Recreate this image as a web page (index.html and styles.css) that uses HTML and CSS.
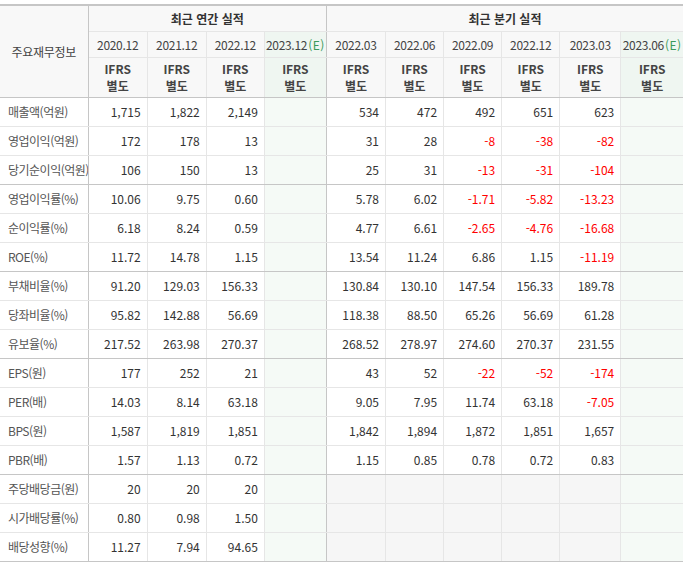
FILE: index.html
```html
<!DOCTYPE html>
<html lang="ko">
<head>
<meta charset="utf-8">
<title>주요재무정보</title>
<link rel="stylesheet" href="styles.css">
</head>
<body>
<table class="fin">
  <colgroup>
    <col class="c-label">
    <col class="c-a"><col class="c-a"><col class="c-a3"><col class="c-e">
    <col class="c-a"><col class="c-a3"><col class="c-a3"><col class="c-a3"><col class="c-q5"><col class="c-e">
  </colgroup>
  <thead>
    <tr class="h1">
      <th rowspan="3" class="label-head">주요재무정보</th>
      <th colspan="4" class="grp grp-end">최근 연간 실적</th>
      <th colspan="6" class="grp">최근 분기 실적</th>
    </tr>
    <tr class="h2">
      <th>2020.12</th><th>2021.12</th><th>2022.12</th><th class="est grp-end">2023.12<span class="e">(E)</span></th>
      <th>2022.03</th><th>2022.06</th><th>2022.09</th><th>2022.12</th><th>2023.03</th><th class="est">2023.06<span class="e">(E)</span></th>
    </tr>
    <tr class="h3">
      <th><span class="l">IFRS</span><span class="l">별도</span></th>
      <th><span class="l">IFRS</span><span class="l">별도</span></th>
      <th><span class="l">IFRS</span><span class="l">별도</span></th>
      <th class="est grp-end"><span class="l">IFRS</span><span class="l">별도</span></th>
      <th><span class="l">IFRS</span><span class="l">별도</span></th>
      <th><span class="l">IFRS</span><span class="l">별도</span></th>
      <th><span class="l">IFRS</span><span class="l">별도</span></th>
      <th><span class="l">IFRS</span><span class="l">별도</span></th>
      <th><span class="l">IFRS</span><span class="l">별도</span></th>
      <th class="est"><span class="l">IFRS</span><span class="l">별도</span></th>
    </tr>
  </thead>
  <tbody>
    <tr><th>매출액(억원)</th><td>1,715</td><td>1,822</td><td>2,149</td><td class="est grp-end"></td><td>534</td><td>472</td><td>492</td><td>651</td><td>623</td><td class="est"></td></tr>
    <tr><th>영업이익(억원)</th><td>172</td><td>178</td><td>13</td><td class="est grp-end"></td><td>31</td><td>28</td><td class="neg">-8</td><td class="neg">-38</td><td class="neg">-82</td><td class="est"></td></tr>
    <tr class="sep"><th>당기순이익(억원)</th><td>106</td><td>150</td><td>13</td><td class="est grp-end"></td><td>25</td><td>31</td><td class="neg">-13</td><td class="neg">-31</td><td class="neg">-104</td><td class="est"></td></tr>
    <tr><th>영업이익률(%)</th><td>10.06</td><td>9.75</td><td>0.60</td><td class="est grp-end"></td><td>5.78</td><td>6.02</td><td class="neg">-1.71</td><td class="neg">-5.82</td><td class="neg">-13.23</td><td class="est"></td></tr>
    <tr><th>순이익률(%)</th><td>6.18</td><td>8.24</td><td>0.59</td><td class="est grp-end"></td><td>4.77</td><td>6.61</td><td class="neg">-2.65</td><td class="neg">-4.76</td><td class="neg">-16.68</td><td class="est"></td></tr>
    <tr class="sep"><th>ROE(%)</th><td>11.72</td><td>14.78</td><td>1.15</td><td class="est grp-end"></td><td>13.54</td><td>11.24</td><td>6.86</td><td>1.15</td><td class="neg">-11.19</td><td class="est"></td></tr>
    <tr><th>부채비율(%)</th><td>91.20</td><td>129.03</td><td>156.33</td><td class="est grp-end"></td><td>130.84</td><td>130.10</td><td>147.54</td><td>156.33</td><td>189.78</td><td class="est"></td></tr>
    <tr><th>당좌비율(%)</th><td>95.82</td><td>142.88</td><td>56.69</td><td class="est grp-end"></td><td>118.38</td><td>88.50</td><td>65.26</td><td>56.69</td><td>61.28</td><td class="est"></td></tr>
    <tr class="sep"><th>유보율(%)</th><td>217.52</td><td>263.98</td><td>270.37</td><td class="est grp-end"></td><td>268.52</td><td>278.97</td><td>274.60</td><td>270.37</td><td>231.55</td><td class="est"></td></tr>
    <tr><th>EPS(원)</th><td>177</td><td>252</td><td>21</td><td class="est grp-end"></td><td>43</td><td>52</td><td class="neg">-22</td><td class="neg">-52</td><td class="neg">-174</td><td class="est"></td></tr>
    <tr><th>PER(배)</th><td>14.03</td><td>8.14</td><td>63.18</td><td class="est grp-end"></td><td>9.05</td><td>7.95</td><td>11.74</td><td>63.18</td><td class="neg">-7.05</td><td class="est"></td></tr>
    <tr><th>BPS(원)</th><td>1,587</td><td>1,819</td><td>1,851</td><td class="est grp-end"></td><td>1,842</td><td>1,894</td><td>1,872</td><td>1,851</td><td>1,657</td><td class="est"></td></tr>
    <tr class="sep"><th>PBR(배)</th><td>1.57</td><td>1.13</td><td>0.72</td><td class="est grp-end"></td><td>1.15</td><td>0.85</td><td>0.78</td><td>0.72</td><td>0.83</td><td class="est"></td></tr>
    <tr class="div"><th>주당배당금(원)</th><td>20</td><td>20</td><td>20</td><td class="est grp-end"></td><td class="na"></td><td class="na"></td><td class="na"></td><td class="na"></td><td class="na"></td><td class="est"></td></tr>
    <tr class="div"><th>시가배당률(%)</th><td>0.80</td><td>0.98</td><td>1.50</td><td class="est grp-end"></td><td class="na"></td><td class="na"></td><td class="na"></td><td class="na"></td><td class="na"></td><td class="est"></td></tr>
    <tr class="div last"><th>배당성향(%)</th><td>11.27</td><td>7.94</td><td>94.65</td><td class="est grp-end"></td><td class="na"></td><td class="na"></td><td class="na"></td><td class="na"></td><td class="na"></td><td class="est"></td></tr>
  </tbody>
</table>
</body>
</html>
```

FILE: styles.css
```css
html, body {
  margin: 0;
  padding: 0;
  background: #fff;
}
body {
  padding-top: 4px;
  font-family: "Noto Sans CJK KR", "Noto Sans", "Liberation Sans", sans-serif;
  font-size: 12px;
  color: #333;
}
.fin {
  width: 683px;
  table-layout: fixed;
  border-collapse: collapse;
  border-top: 2px solid #c6c6c6;
  border-bottom: 1px solid #c6c6c6;
}
.c-label { width: 88px; }
.c-a { width: 59px; }
.c-a3 { width: 58px; }
.c-q5 { width: 61px; }
.c-e { width: 62px; }

.fin th, .fin td {
  padding: 0;
  border-left: 1px solid #e6e6e6;
  border-bottom: 1px solid #e6e6e6;
  font-weight: normal;
  white-space: nowrap;
  overflow: hidden;
}
.fin tr > :first-child { border-left: none; }
.fin tr > :last-child { border-right: none; }

.fin thead th {
  background: #f8f8f8;
  text-align: center;
  color: #444;
}
.fin thead .label-head {
  border-right: 1px solid #c6c6c6;
  border-bottom: 1px solid #c6c6c6;
  color: #444;
  letter-spacing: -0.3px;
}
.h1 { height: 26px; }
.h1 .grp { font-weight: bold; color: #333; }
.h2 { height: 26px; }
.h2 th { letter-spacing: -0.3px; }
.h3 { height: 40px; }
.h3 th {
  color: #f26b21;
  font-weight: bold;
  border-bottom: 1px solid #c6c6c6;
}
.h3 .l {
  display: block;
  line-height: 17px;
}
.fin thead th.est { background: #eff6f1; }
.e { color: #3a9a5c; margin-left: 1px; letter-spacing: 0.5px; }

.fin .grp-end { border-right: 1px solid #c6c6c6; }

.fin tbody tr { height: 29px; }
.fin tbody th {
  text-align: left;
  padding-left: 8px;
  color: #555;
  background: #fff;
  letter-spacing: -0.5px;
  border-right: 1px solid #c6c6c6;
}
.fin tbody td {
  text-align: right;
  padding-right: 6px;
  color: #333;
}
.fin tbody td.neg { color: #f00; }
.fin tbody td.est { background: #f5faf6; }
.fin tbody td.na { background: #f6f6f6; }
.fin tbody tr.sep > * { border-bottom: 1px solid #c6c6c6; }
.fin tbody tr.last > * { border-bottom: 1px solid #c6c6c6; }
```
